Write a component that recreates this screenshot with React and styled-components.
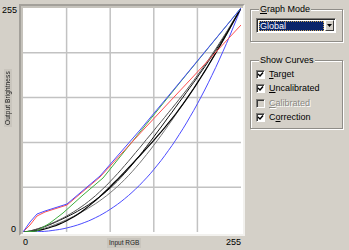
import React from 'react';
import styled, { createGlobalStyle } from 'styled-components';

const Global = createGlobalStyle`
  html, body { margin: 0; padding: 0; background: #d4d0c8; }
  body { font-family: "Liberation Sans", Arial, sans-serif; font-size: 9px; color: #000; }
`;

const Window = styled.div`
  width: 349px;
  height: 250px;
  display: flex;
  background: #d4d0c8;
  overflow: hidden;
`;

const GraphArea = styled.div`
  display: grid;
  grid-template-columns: 19px 226px;
  grid-template-rows: 232px 14px;
  padding-top: 4px;
  width: 245px;
`;

const AxisCol = styled.div`
  display: flex;
  flex-direction: column;
  align-items: flex-end;
`;

const AxisNum = styled.div`
  font-size: 9px;
  line-height: 10px;
  padding-right: ${p => p.$pr || 0}px;
  margin-top: ${p => p.$mt || 0}px;
`;

const VLabel = styled.div`
  align-self: flex-start;
  margin-left: 4px;
  margin-top: ${p => p.$mt}px;
  writing-mode: vertical-rl;
  transform: rotate(180deg);
  font-size: 6.5px;
  line-height: 8px;
  height: 58px;
  text-align: center;
  background: #c9c5bd;
  color: #222;
  letter-spacing: 0.1px;
`;

const PlotFrame = styled.div`
  border-style: solid;
  border-width: 2px;
  border-color: #a3a09a #f2f1ee #f2f1ee #a3a09a;
  box-shadow: inset 2px 2px 0 #c6c3bc;
  padding: 2px 0 0 2px;
  background: #fff;
  box-sizing: border-box;
  width: 226px;
  height: 232px;
  overflow: hidden;
`;

const Plot = styled.svg`
  display: block;
  width: 218px;
  height: 224px;
`;

const BottomRow = styled.div`
  grid-column: 2;
  display: flex;
  align-items: flex-start;
  padding-top: 1px;
`;

const XLabel = styled.div`
  font-size: 6.5px;
  line-height: 8px;
  padding: 1px 2px;
  margin-top: 1px;
  background: #c9c5bd;
  color: #222;
  margin-left: ${p => p.$ml}px;
`;

const Side = styled.div`
  display: flex;
  flex-direction: column;
  padding: 4px 0 0 5px;
  width: 93px;
`;

const Group = styled.fieldset`
  margin: ${p => p.$mt || 0}px 0 0 0;
  padding: ${p => p.$pad};
  border: 1px solid #8f8d88;
  box-shadow: inset 1px 1px 0 #fff, 1px 1px 0 #fff;
  min-width: 0;
`;

const Legend = styled.legend`
  padding: 0 1px;
  margin-left: 3px;
  font-size: 9px;
  line-height: 11px;
  background: #d4d0c8;
`;

const Combo = styled.div`
  display: flex;
  width: 80px;
  height: 15px;
  box-sizing: border-box;
  border-style: solid;
  border-width: 1px;
  border-color: #7d7b77 #fff #fff #7d7b77;
  box-shadow: inset 1px 1px 0 #2b2b2b;
  background: #fff;
  padding: 2px 1px 1px 2px;
`;

const ComboValue = styled.div`
  flex: 1;
  background: #0a246a;
  color: #fff;
  font-size: 9px;
  line-height: 10px;
  padding-left: 1px;
  outline: 1px dotted #c9a65a;
  outline-offset: -1px;
`;

const ComboButton = styled.div`
  width: 9px;
  margin: -1px 0 0 1px;
  background: #d4d0c8;
  box-sizing: border-box;
  border-style: solid;
  border-width: 1px;
  border-color: #fff #404040 #404040 #fff;
  display: flex;
  align-items: center;
  justify-content: center;
`;

const Row = styled.label`
  display: flex;
  align-items: center;
  height: 14.5px;
  color: ${p => (p.$disabled ? '#8a8882' : '#000')};
  text-shadow: ${p => (p.$disabled ? '1px 1px 0 #fff' : 'none')};
`;

const Box = styled.span`
  width: 9px;
  height: 9px;
  box-sizing: border-box;
  border-style: solid;
  border-width: 1px;
  border-color: #7d7b77 #fff #fff #7d7b77;
  box-shadow: inset 1px 1px 0 #3a3a3a;
  background: ${p => (p.$disabled ? '#d4d0c8' : '#fff')};
  display: flex;
  align-items: center;
  justify-content: center;
  margin-right: 4px;
  flex: none;
`;

const Label = styled.span`
  font-size: 9px;
  line-height: 11px;
`;

const X0 = 23, Y0 = 232, W = 218, H = 224;
const pt = (x, y) => `${(x - X0).toFixed(1)},${(y - 8).toFixed(1)}`;
const poly = pts => pts.map(([x, y]) => pt(x, y)).join(' ');
const gamma = (g, wob = 0, ph = 0) => {
  const out = [];
  for (let i = 0; i <= 60; i++) {
    const t = i / 60;
    const w = wob * Math.sin(t * Math.PI * 3 + ph) * Math.sin(t * Math.PI);
    const v = Math.min(1, Math.max(0, Math.pow(t, g) + w));
    out.push([X0 + W * t, Y0 - H * v]);
  }
  return poly(out);
};

const green = poly([[23, 232], [37, 231], [50, 223], [63, 213], [83, 195], [103, 178], [140, 132], [182, 80], [241, 8]]);
const red = poly([[23, 232], [30, 225], [37, 216], [45, 212], [67, 205], [100, 177], [145, 128], [190, 80], [241, 25]]);
const blueUp = poly([[23, 232], [30, 222], [37, 214], [45, 211], [67, 204], [100, 176], [140, 130], [180, 82], [241, 8]]);

const Check = () => (
  <svg width="7" height="7" viewBox="0 0 7 7">
    <path d="M1 3 L3 5 L6 1.5" stroke="#000" strokeWidth="1.4" fill="none" />
  </svg>
);

const rows = [
  { pre: '', u: 'T', post: 'arget', on: true },
  { pre: '', u: 'U', post: 'ncalibrated', on: true },
  { pre: '', u: 'C', post: 'alibrated', on: false, disabled: true },
  { pre: 'C', u: 'o', post: 'rrection', on: true },
];

export default function App() {
  const grid = [1, 2, 3, 4];
  return (
    <>
      <Global />
      <Window>
        <GraphArea>
          <AxisCol>
            <AxisNum $pr={2} $mt={1}>255</AxisNum>
            <VLabel $mt={54}>Output Brightness</VLabel>
            <AxisNum $pr={3} $mt={97}>0</AxisNum>
          </AxisCol>
          <PlotFrame>
            <Plot viewBox={`0 0 ${W} ${H}`}>
              {grid.map(i => (
                <line key={'v' + i} x1={(W * i) / 5} y1="0" x2={(W * i) / 5} y2={H} stroke="#c2c2c2" strokeWidth="1.5" />
              ))}
              {grid.map(i => (
                <line key={'h' + i} x1="0" y1={(H * i) / 5} x2={W} y2={(H * i) / 5} stroke="#c2c2c2" strokeWidth="1.5" />
              ))}
              <polyline points={gamma(2.5)} fill="none" stroke="#4b4bff" strokeWidth="1" />
              <polyline points={gamma(1.85, 0.01, 0.5)} fill="none" stroke="#777" strokeWidth="1" />
              <polyline points={gamma(1.7, 0.015, 1)} fill="none" stroke="#111" strokeWidth="1" />
              <polyline points={gamma(1.6, 0.012, 2)} fill="none" stroke="#555" strokeWidth="1" />
              <polyline points={gamma(1.78, -0.012, 0)} fill="none" stroke="#000" strokeWidth="1.2" />
              <polyline points={green} fill="none" stroke="#3fae3f" strokeWidth="1" />
              <polyline points={red} fill="none" stroke="#ff5050" strokeWidth="1" />
              <polyline points={blueUp} fill="none" stroke="#4b4bff" strokeWidth="1" />
            </Plot>
          </PlotFrame>
          <BottomRow>
            <AxisNum $pr={0} style={{ marginLeft: 4 }}>0</AxisNum>
            <XLabel $ml={79}>Input RGB</XLabel>
            <AxisNum $pr={4} style={{ marginLeft: 'auto' }}>255</AxisNum>
          </BottomRow>
        </GraphArea>
        <Side>
          <Group $pad="3px 0 8px 5px">
            <Legend><u>G</u>raph Mode</Legend>
            <Combo>
              <ComboValue>Global</ComboValue>
              <ComboButton>
                <svg width="5" height="3" viewBox="0 0 5 3"><path d="M0 0 H5 L2.5 3 Z" fill="#000" /></svg>
              </ComboButton>
            </Combo>
          </Group>
          <Group $mt={13} $pad="1px 0 3px 5px">
            <Legend>Show Curves</Legend>
            {rows.map((r, i) => (
              <Row key={i} $disabled={r.disabled}>
                <Box $disabled={r.disabled}>{r.on && <Check />}</Box>
                <Label>{r.pre}<u>{r.u}</u>{r.post}</Label>
              </Row>
            ))}
          </Group>
        </Side>
      </Window>
    </>
  );
}
